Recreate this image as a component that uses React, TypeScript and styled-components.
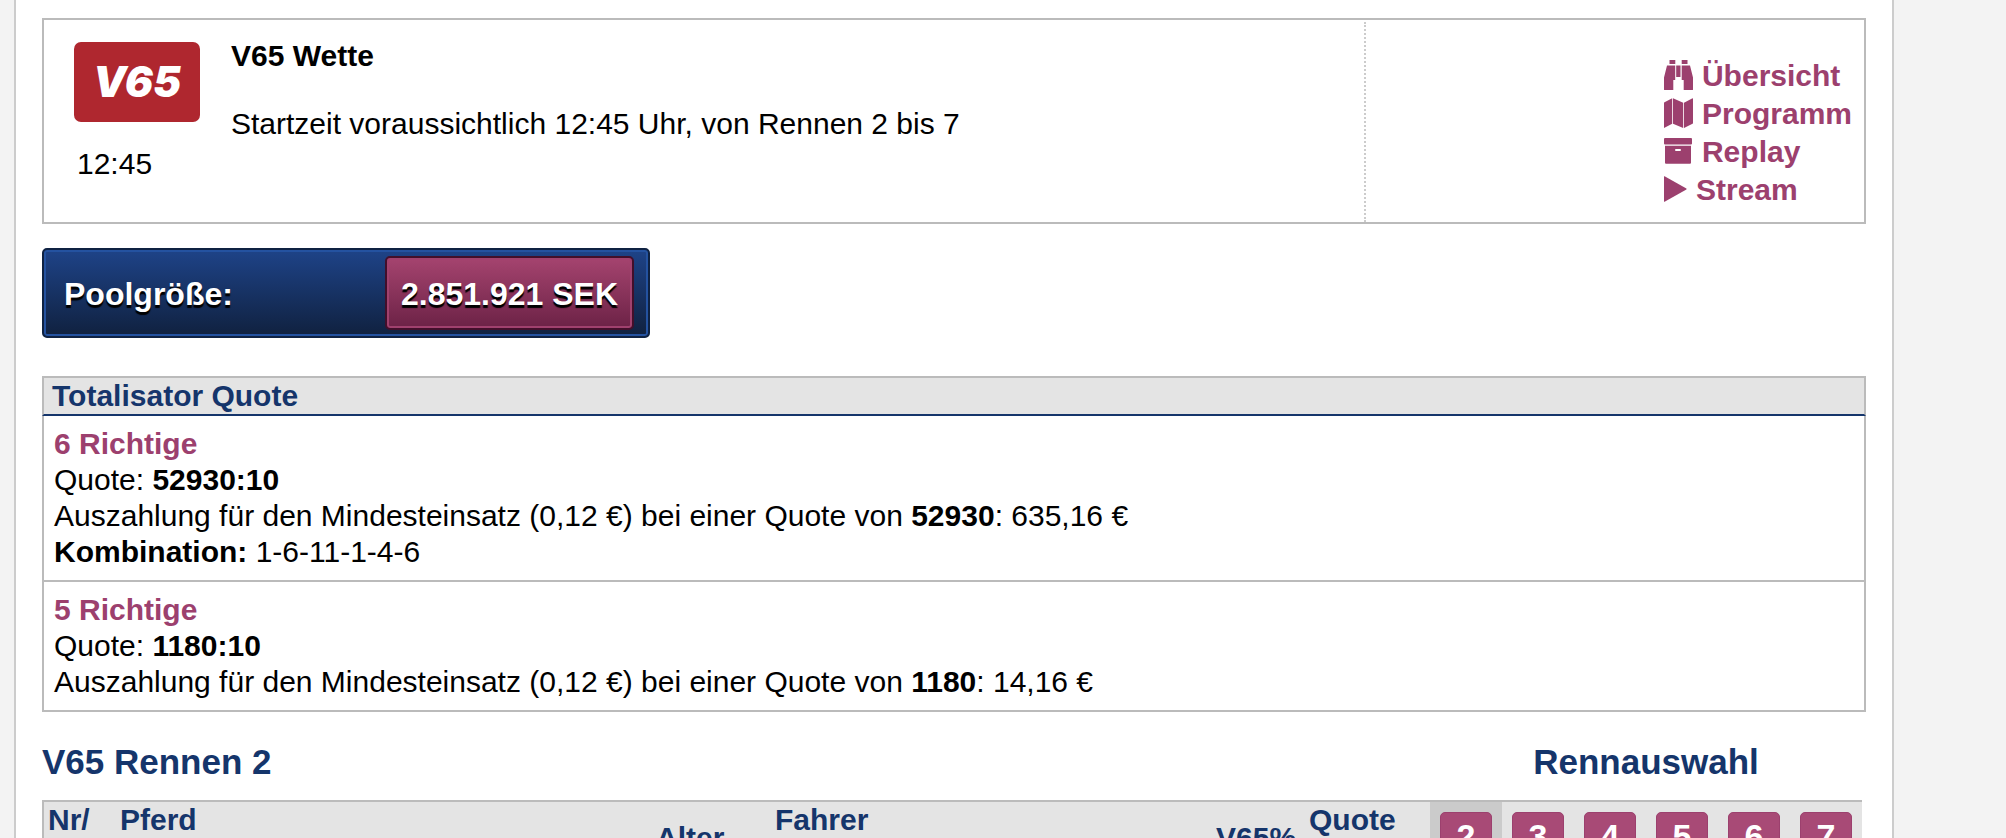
import React from 'react';
import styled, { createGlobalStyle } from 'styled-components';

const navy = '#15356b';
const plum = '#9c406e';
const line = '#bbbbbb';

const GlobalStyle = createGlobalStyle`
  *, *::before, *::after { box-sizing: border-box; }
  body {
    margin: 0;
    background: #f3f3f3;
    color: #000;
    font: 30px/36px "Liberation Sans", Arial, Helvetica, sans-serif;
  }
`;

const Page = styled.main`
  height: 100vh;
  overflow: hidden;
  margin: 0 112px 0 14px;
  padding: 18px 26px 0;
  background: #fff;
  border: solid #cccccc;
  border-width: 0 2px;
`;

const BetPanel = styled.section`
  display: flex;
  min-height: 206px;
  border: 2px solid ${line};
`;

const BadgeColumn = styled.div`
  display: flex;
  flex-direction: column;
  align-items: flex-start;
  gap: 24px;
  padding: 22px 31px 0 30px;
`;

const BetBadge = styled.div`
  display: flex;
  align-items: center;
  justify-content: center;
  width: 126px;
  height: 80px;
  border-radius: 7px;
  background: #af272f;
  color: #fff;
  font: italic 900 42px/80px Inter, sans-serif;
`;

const StartTime = styled.time`
  padding-left: 3px;
`;

const BetInfo = styled.div`
  flex: 1;
  padding-top: 18px;
`;

const BetTitle = styled.h1`
  margin: 0 0 32px;
  font-size: 30px;
  line-height: 36px;
`;

const Paragraph = styled.p`
  margin: 0;
`;

const LinkArea = styled.nav`
  display: flex;
  justify-content: flex-end;
  width: 500px;
  margin-top: 2px;
  padding: 35px 12px 0 0;
  border-left: 2px dotted #cccccc;
`;

const LinkList = styled.ul`
  margin: 0;
  padding: 0;
  list-style: none;
`;

const BetLink = styled.a`
  display: flex;
  align-items: center;
  gap: 8px;
  line-height: 38px;
  font-weight: bold;
  color: ${plum};
  text-decoration: none;
`;

const Icon = styled.svg`
  flex: none;
  margin-bottom: 2px;
  fill: currentColor;
`;

const PoolBox = styled.section`
  display: flex;
  align-items: center;
  justify-content: space-between;
  width: 608px;
  height: 90px;
  margin: 24px 0 38px;
  padding: 0 14px 0 20px;
  border: 2px solid #0f2242;
  border-radius: 5px;
  background: linear-gradient(#1e4388, #10213f);
  box-shadow: inset 0 0 0 2px #2452a0;
  color: #fff;
  font-size: 32px;
  font-weight: bold;
  text-shadow: 0 3px 1px #000;
`;

const PoolLabel = styled.span`
  padding-top: 2px;
`;

const PoolValue = styled.output`
  padding: 2px 14px 0;
  border: 2px solid #420f2b;
  border-radius: 5px;
  background: linear-gradient(#a5446f, #6c2246);
  box-shadow: inset 0 0 0 2px #a0416e;
  line-height: 68px;
`;

const QuoteHeader = styled.h2`
  margin: 0;
  padding: 0 8px;
  border: 2px solid ${line};
  border-bottom-color: ${navy};
  background: #e4e4e4;
  color: ${navy};
  font-size: 30px;
  line-height: 36px;
`;

const QuoteEntry = styled.section`
  padding: 10px;
  border: solid ${line};
  border-width: 0 2px 2px;
`;

const QuoteTitle = styled.h3`
  margin: 0;
  color: ${plum};
  font-size: 30px;
  line-height: 36px;
`;

const RaceHeading = styled.header`
  display: flex;
  justify-content: space-between;
  padding: 30px 4px 18px 0;
`;

const RaceTitle = styled.h2`
  margin: 0;
  color: ${navy};
  font-size: 35px;
  line-height: 40px;
`;

const SelectionTitle = styled(RaceTitle)`
  width: 432px;
  text-align: center;
`;

const TableFrame = styled.div`
  padding-right: 4px;
`;

const RaceTable = styled.table`
  width: 100%;
  table-layout: fixed;
  border-spacing: 0;
  border: solid ${line};
  border-width: 2px 0 0 2px;
  background: #e4e4e4;
  color: ${navy};
`;

const Column = styled.col<{ $width?: number }>`
  width: ${({ $width }) => ($width ? `${$width}px` : 'auto')};
`;

const HeadCell = styled.th<{ $middle?: boolean }>`
  height: 72px;
  padding: 0 4px;
  text-align: left;
  vertical-align: ${({ $middle }) => ($middle ? 'middle' : 'top')};
`;

const RaceCell = styled.th<{ $active: boolean }>`
  height: 72px;
  padding: 10px;
  background: ${({ $active }) => ($active ? '#cbcbcb' : 'transparent')};
`;

const RaceButton = styled.button`
  display: block;
  width: 52px;
  height: 52px;
  padding: 0 0 4px;
  border: 1px solid #9c406e;
  border-radius: 5px;
  background: #a84a76;
  color: #fff;
  font: bold 34px/44px "Liberation Sans", Arial, sans-serif;
`;

const BinocularsIcon = () => (
  <Icon width="30" height="30" viewBox="0 0 30 30" aria-hidden="true">
    <path d="M5.5 0h5.8v4H5.5zM17.7 0h5.8v4h-5.8zM12.2 5.5h4.3V17h-4.3zM3 5.5h8.2V20H9.3v10H.6Q0 30 0 29.400V17.500zM17.700 5.500H26l3 12v11.900q0 .6-.6.6h-8.700V20h-2z" />
  </Icon>
);

const MapIcon = () => (
  <Icon width="30" height="30" viewBox="0 0 30 30" aria-hidden="true">
    <path d="M8.200.2v25.600L0 30V5Q0 4.500.5 4.200zM9 .2l10.200 4.600V30L9 25.800zM20 4.800L28.500.2q.5 0 .5.500V25q0 .5-.5.800L20 30z" />
  </Icon>
);

const ArchiveIcon = () => (
  <Icon width="30" height="26" viewBox="0 0 30 26" aria-hidden="true">
    <path
      fillRule="evenodd"
      d="M1 0h26q1 0 1 1v4.500q0 1-1 1H1q-1 0-1-1V1q0-1 1-1zM1 7.800h26v17q0 1-1 1H2q-1 0-1-1zM12 11a1 1 0 0 0 0 2h4a1 1 0 0 0 0-2z"
    />
  </Icon>
);

const PlayIcon = () => (
  <Icon width="24" height="26" viewBox="0 0 24 26" aria-hidden="true">
    <path d="M0 .6Q0 0 .6.200L22.400 12.600q.5.400 0 .8L.6 25.800Q0 26 0 25.400z" />
  </Icon>
);

const links = [
  { label: 'Übersicht', icon: <BinocularsIcon /> },
  { label: 'Programm', icon: <MapIcon /> },
  { label: 'Replay', icon: <ArchiveIcon /> },
  { label: 'Stream', icon: <PlayIcon /> },
];

const quotes = [
  { title: '6 Richtige', quote: '52930', payout: '635,16 €', combination: '1-6-11-1-4-6' },
  { title: '5 Richtige', quote: '1180', payout: '14,16 €' },
];

const columns: { label: string; width?: number; middle?: boolean }[] = [
  { label: 'Nr/', width: 72 },
  { label: 'Pferd' },
  { label: 'Alter', width: 119, middle: true },
  { label: 'Fahrer', width: 441 },
  { label: 'V65%', width: 93, middle: true },
  { label: 'Quote', width: 125 },
];

const races = [2, 3, 4, 5, 6, 7];
const activeRace = 2;

export default function App() {
  return (
    <>
      <GlobalStyle />
      <Page>
        <BetPanel>
          <BadgeColumn>
            <BetBadge>V65</BetBadge>
            <StartTime>12:45</StartTime>
          </BadgeColumn>
          <BetInfo>
            <BetTitle>V65 Wette</BetTitle>
            <Paragraph>Startzeit voraussichtlich 12:45 Uhr, von Rennen 2 bis 7</Paragraph>
          </BetInfo>
          <LinkArea>
            <LinkList>
              {links.map(({ label, icon }) => (
                <li key={label}>
                  <BetLink href="#">
                    {icon}
                    {label}
                  </BetLink>
                </li>
              ))}
            </LinkList>
          </LinkArea>
        </BetPanel>

        <PoolBox>
          <PoolLabel>Poolgröße:</PoolLabel>
          <PoolValue>2.851.921 SEK</PoolValue>
        </PoolBox>

        <QuoteHeader>Totalisator Quote</QuoteHeader>
        {quotes.map(({ title, quote, payout, combination }) => (
          <QuoteEntry key={title}>
            <QuoteTitle>{title}</QuoteTitle>
            <Paragraph>
              Quote: <strong>{quote}:10</strong>
            </Paragraph>
            <Paragraph>
              Auszahlung für den Mindesteinsatz (0,12 €) bei einer Quote von <strong>{quote}</strong>: {payout}
            </Paragraph>
            {combination && (
              <Paragraph>
                <strong>Kombination:</strong> {combination}
              </Paragraph>
            )}
          </QuoteEntry>
        ))}

        <RaceHeading>
          <RaceTitle>V65 Rennen 2</RaceTitle>
          <SelectionTitle>Rennauswahl</SelectionTitle>
        </RaceHeading>
        <TableFrame>
          <RaceTable>
            <colgroup>
              {columns.map(({ label, width }) => (
                <Column key={label} $width={width} />
              ))}
              {races.map((race) => (
                <Column key={race} $width={72} />
              ))}
            </colgroup>
            <thead>
              <tr>
                {columns.map(({ label, middle }) => (
                  <HeadCell key={label} scope="col" $middle={middle}>
                    {label}
                  </HeadCell>
                ))}
                {races.map((race) => (
                  <RaceCell key={race} scope="col" $active={race === activeRace}>
                    <RaceButton type="button">{race}</RaceButton>
                  </RaceCell>
                ))}
              </tr>
            </thead>
          </RaceTable>
        </TableFrame>
      </Page>
    </>
  );
}
